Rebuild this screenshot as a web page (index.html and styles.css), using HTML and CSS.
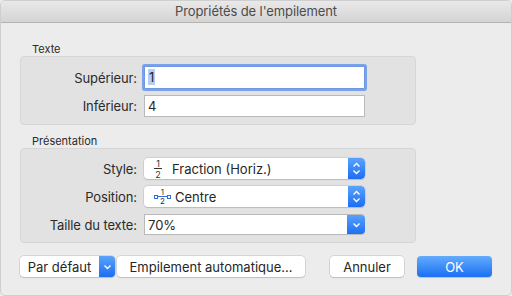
FILE: index.html
```html
<!DOCTYPE html>
<html lang="fr">
<head>
<meta charset="utf-8">
<link rel="stylesheet" href="styles.css">
</head>
<body>
<div class="window">
  <div class="titlebar">Propriétés de l'empilement</div>
  <div class="content">
    <div class="group-label">Texte</div>
    <div class="group g1">
      <div class="row"><label class="lbl">Supérieur:</label><div class="field focus"><span class="sel">1</span></div></div>
      <div class="row"><label class="lbl">Inférieur:</label><div class="field">4</div></div>
    </div>
    <div class="group-label">Présentation</div>
    <div class="group g2">
      <div class="row"><label class="lbl">Style:</label>
        <div class="popup">
          <span class="val"><span class="frac"><span>1</span><span class="bar"></span><span>2</span></span>Fraction (Horiz.)</span>
          <span class="arrow"><svg width="9" height="13" viewBox="0 0 9 13"><path d="M1.5 4.5 L4.5 1.5 L7.5 4.5 M1.5 8.5 L4.5 11.5 L7.5 8.5" fill="none" stroke="#fff" stroke-width="1.4"/></svg></span>
        </div>
      </div>
      <div class="row"><label class="lbl">Position:</label>
        <div class="popup">
          <span class="val"><span class="posicon"><span class="sq"></span><span class="ln"></span><span class="frac sm"><span>1</span><span class="bar blue"></span><span>2</span></span><span class="ln"></span><span class="sq"></span></span>Centre</span>
          <span class="arrow"><svg width="9" height="13" viewBox="0 0 9 13"><path d="M1.5 4.5 L4.5 1.5 L7.5 4.5 M1.5 8.5 L4.5 11.5 L7.5 8.5" fill="none" stroke="#fff" stroke-width="1.4"/></svg></span>
        </div>
      </div>
      <div class="row"><label class="lbl">Taille du texte:</label>
        <div class="combo">
          <span class="cval">70%</span>
          <span class="arrow wide"><svg width="9" height="6" viewBox="0 0 9 6"><path d="M1.5 1.5 L4.5 4.5 L7.5 1.5" fill="none" stroke="#fff" stroke-width="1.4"/></svg></span>
        </div>
      </div>
    </div>
    <div class="buttons">
      <div class="split">
        <span class="btn split-main">Par défaut</span>
        <span class="split-arrow"><svg width="9" height="6" viewBox="0 0 9 6"><path d="M1.5 1.5 L4.5 4.5 L7.5 1.5" fill="none" stroke="#fff" stroke-width="1.4"/></svg></span>
      </div>
      <span class="btn auto">Empilement automatique...</span>
      <span class="spacer"></span>
      <span class="btn cancel">Annuler</span>
      <span class="btn ok">OK</span>
    </div>
  </div>
</div>
</body>
</html>
```
FILE: styles.css
```css
* { box-sizing: border-box; }
html, body { margin: 0; padding: 0; background: #ececec; }
body { font-family: Inter, "Noto Sans", sans-serif; font-size: 13px; color: #262626; }
.window {
  width: 512px; height: 296px; background: #ececec;
  border: 1px solid #cfcfcf; border-radius: 5px; overflow: hidden;
  display: flex; flex-direction: column;
}
.titlebar {
  height: 22px; flex: none;
  background: linear-gradient(#e9e9e9, #d4d4d4);
  border-bottom: 1px solid #b3b3b3;
  text-align: center; line-height: 21px; font-size: 13px; color: #4c4c4c;
  letter-spacing: -0.1px;
}
.content { padding: 20px 0 0 19px; display: flex; flex-direction: column; }
.group-label { font-size: 11px; line-height: 13px; height: 13px; padding-left: 12px; color: #2a2a2a; }
.group {
  width: 396px; background: #e2e2e2; border: 1px solid #d6d6d6; border-radius: 4px;
  display: flex; flex-direction: column;
}
.g1 { height: 69px; padding-top: 9px; gap: 5px; margin-bottom: 10px; }
.g2 { height: 95px; padding-top: 9px; gap: 7px; }
.row { display: flex; align-items: center; height: 21px; }
.g1 .row { height: 23px; }
.lbl { width: 116px; text-align: right; margin-right: 7px; color: #2b2b2b; letter-spacing: -0.1px; }
.field {
  width: 221px; height: 23px; background: #fff; border: 1px solid #b9b9b9;
  padding-left: 3px; line-height: 21px; font-size: 13px;
}
.g1 .row:last-child .field { height: 22px; }
.field.focus { border-color: #6e98e6; box-shadow: 0 0 0 2px #7ba1e8; border-radius: 1px; }
.sel { background: #b3cdf5; padding: 0 1px; }
.popup, .combo {
  width: 221px; height: 21px; background: #fff; border-radius: 4px;
  box-shadow: 0 0 0 0.5px #bdbdbd, 0 1px 1px rgba(0,0,0,0.18);
  display: flex; align-items: center; overflow: hidden;
}
.val { flex: 1; display: flex; align-items: center; padding-left: 10px; }
.frac { display: inline-flex; flex-direction: column; align-items: center; font-size: 9px; line-height: 7px; width: 8px; margin-right: 10px; color: #333; }
.frac .bar { width: 8px; height: 1px; background: #333; margin: 1px 0 2px; }
.frac.sm { margin-right: 0; width: 7px; font-size: 8px; line-height: 6px; }
.frac.sm .bar.blue { background: #2f6ee0; width: 7px; margin: 1px 0; }
.posicon { display: inline-flex; align-items: center; margin-right: 4px; margin-left: 0; }
.posicon .sq { width: 4px; height: 4px; border: 1px solid #2f6ee0; }
.posicon .ln { width: 1px; height: 1px; background: #2f6ee0; }
.arrow {
  width: 17px; height: 21px; flex: none;
  background: linear-gradient(#5aa3fc, #1c6df3);
  display: flex; align-items: center; justify-content: center;
  border-radius: 0 4px 4px 0;
}
.arrow.wide { width: 18px; }
.combo { border-radius: 0 4px 4px 0; box-shadow: none; border: 1px solid #b9b9b9; border-right: none; }
.combo .arrow { height: 21px; margin-top: -1px; margin-bottom: -1px; }
.cval { flex: 1; padding-left: 3px; }
.buttons { display: flex; align-items: center; margin-top: 13px; height: 21px; padding-right: 19px; }
.btn {
  height: 21px; background: #fff; border-radius: 4px;
  box-shadow: 0 0 0 0.5px #bdbdbd, 0 1px 1px rgba(0,0,0,0.18);
  display: inline-flex; align-items: center; justify-content: center; color: #262626;
}
.split { display: flex; width: 95px; height: 21px; border-radius: 4px; box-shadow: 0 0 0 0.5px #bdbdbd, 0 1px 1px rgba(0,0,0,0.18); overflow: hidden; }
.split-main { width: 79px; border-radius: 4px 0 0 4px; box-shadow: none; }
.split-arrow { width: 16px; background: linear-gradient(#5aa3fc, #1c6df3); display: flex; align-items: center; justify-content: center; }
.auto { width: 188px; margin-left: 2px; }
.spacer { flex: 1; }
.cancel { width: 74px; margin-right: 13px; }
.ok { width: 75px; background: linear-gradient(#64acfc, #1a6ff3); color: #fff; box-shadow: 0 1px 1px rgba(0,0,0,0.18); }
```
